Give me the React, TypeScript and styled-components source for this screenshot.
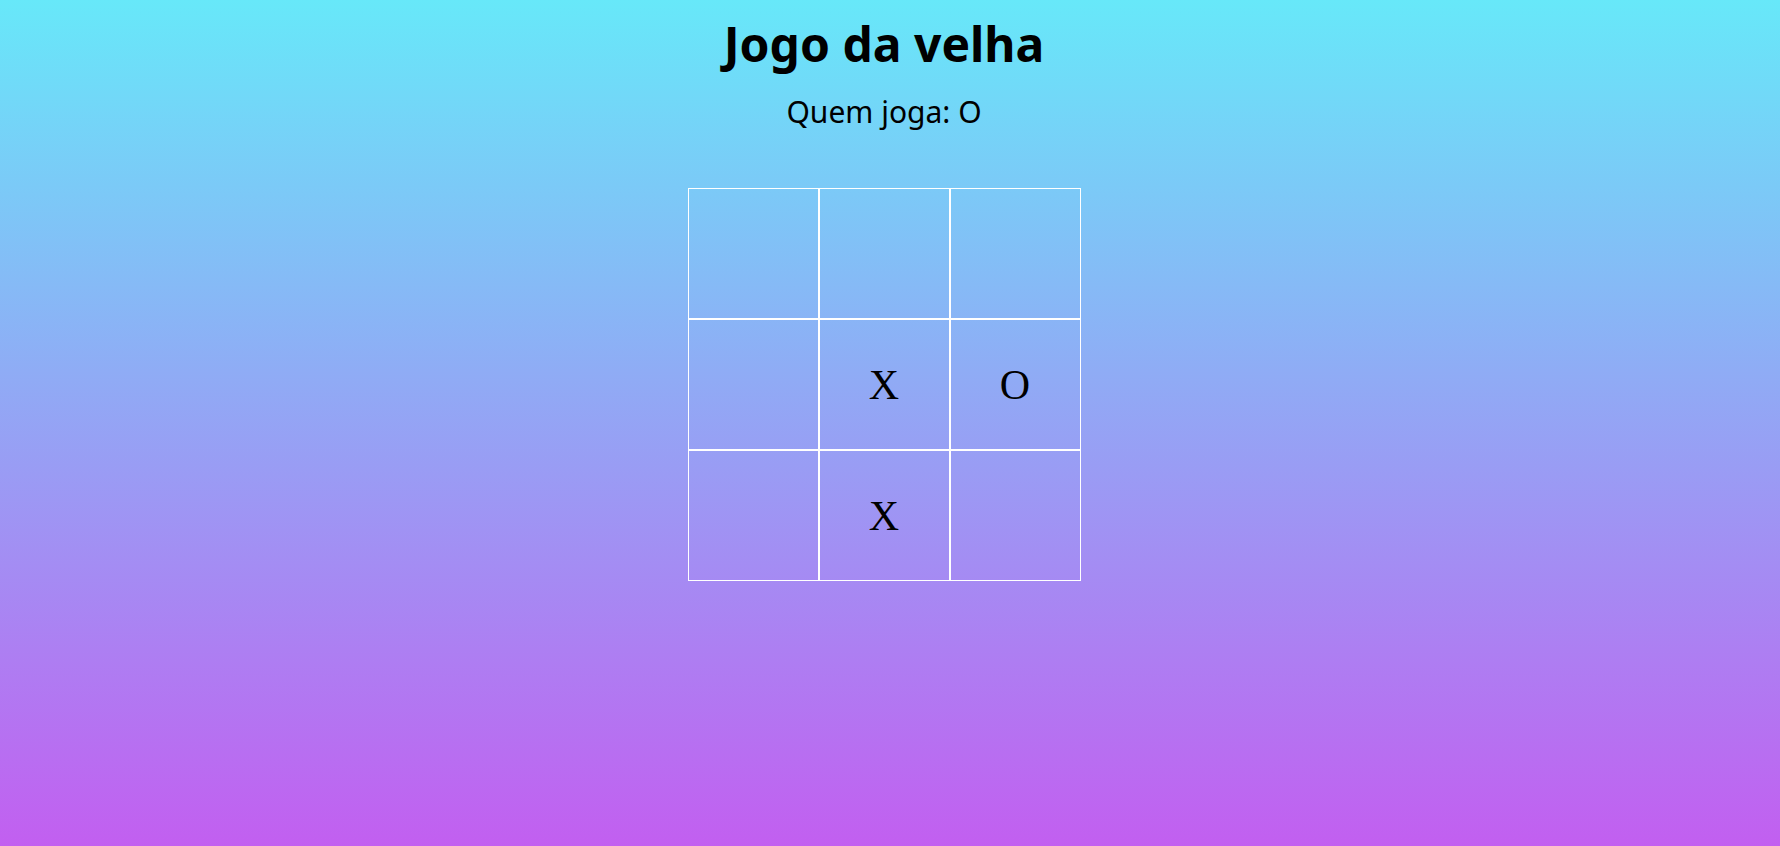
import React from "react";
import styled, { createGlobalStyle } from "styled-components";

const Global = createGlobalStyle`
  html, body { margin: 0; padding: 0; height: 100%; }
  body {
    background: linear-gradient(180deg, #67e8f9 0%, #c25ff0 100%);
    min-height: 846px;
    font-family: "Noto Sans", "Open Sans", sans-serif;
    color: #000;
  }
  #root { min-height: 846px; }
`;

const Page = styled.main`
  display: flex;
  flex-direction: column;
  align-items: center;
  padding-right: 12px;
  min-height: 846px;
  box-sizing: border-box;
`;

const Title = styled.h1`
  margin: 14px 0 0;
  font-size: 48px;
  line-height: 60px;
  font-weight: 700;
`;

const Turn = styled.p`
  margin: 20px 0 0;
  font-size: 30px;
  line-height: 36px;
  font-weight: 400;
`;

const Board = styled.div`
  margin-top: 58px;
  display: grid;
  grid-template-columns: repeat(3, 131px);
  grid-template-rows: repeat(3, 131px);
`;

const Cell = styled.button`
  box-sizing: border-box;
  width: 131px;
  height: 131px;
  border: 1px solid #fff;
  background: transparent;
  padding: 0;
  display: flex;
  align-items: center;
  justify-content: center;
  font-family: "Liberation Serif", "Times New Roman", serif;
  font-size: 42px;
  color: #000;
  cursor: pointer;
`;

const cells = ["", "", "", "", "X", "O", "", "X", ""];

export default function App() {
  return (
    <>
      <Global />
      <Page>
        <Title>Jogo da velha</Title>
        <Turn>Quem joga: O</Turn>
        <Board>
          {cells.map((v, i) => (
            <Cell key={i}>{v}</Cell>
          ))}
        </Board>
      </Page>
    </>
  );
}
